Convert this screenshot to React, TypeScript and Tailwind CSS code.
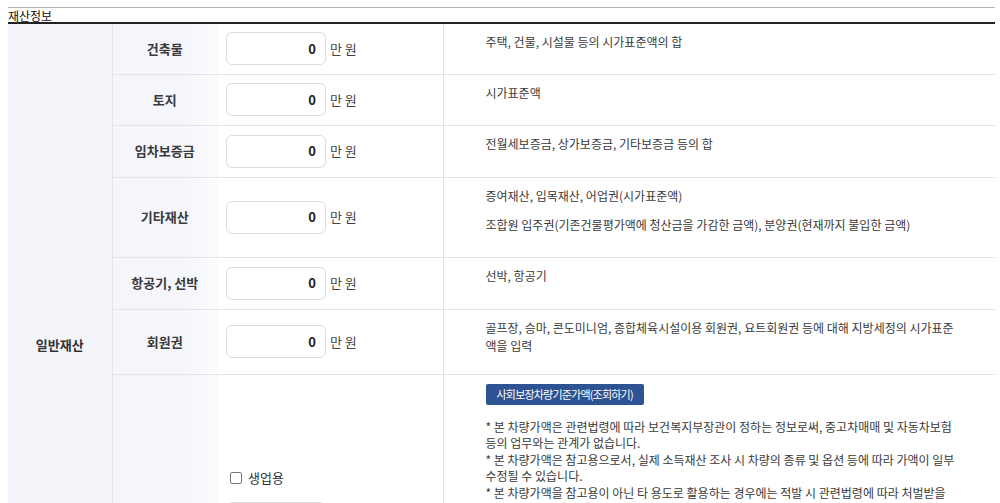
import React from "react";

const rows = [
  { label: "건축물", h: "h-[51px]", desc: ["주택, 건물, 시설물 등의 시가표준액의 합"] },
  { label: "토지", h: "h-[51px]", desc: ["시가표준액"] },
  { label: "임차보증금", h: "h-[52px]", desc: ["전월세보증금, 상가보증금, 기타보증금 등의 합"] },
  {
    label: "기타재산",
    h: "h-[80px]",
    desc: [
      "증여재산, 입목재산, 어업권(시가표준액)",
      "조합원 입주권(기존건물평가액에 청산금을 가감한 금액), 분양권(현재까지 불입한 금액)",
    ],
  },
  { label: "항공기, 선박", h: "h-[52px]", desc: ["선박, 항공기"] },
  {
    label: "회원권",
    h: "h-[65px]",
    desc: ["골프장, 승마, 콘도미니엄, 종합체육시설이용 회원권, 요트회원권 등에 대해 지방세정의 시가표준액을 입력"],
  },
];

function AmountInput() {
  return (
    <div className="flex items-center">
      <div className="w-[100px] h-[33px] border border-[#dcdcdc] rounded-[6px] bg-white flex items-center justify-end pr-[9px] text-[13px] font-bold text-[#222]">
        0
      </div>
      <span className="ml-[4px] text-[13px] text-[#444]">만 원</span>
    </div>
  );
}

export default function App() {
  return (
    <div className="w-[1000px] bg-white pl-[8px] pr-[5px] pt-[7px] font-['Noto_Sans_CJK_KR','Noto_Sans',sans-serif] text-[#333]">
      <div className="border-t border-[#b5b5b5] h-[15px] text-[12px] leading-[15px] text-[#111]">재산정보</div>
      <table className="w-full table-fixed border-collapse border-t-2 border-[#222]">
        <colgroup>
          <col className="w-[104px]" />
          <col className="w-[105px]" />
          <col className="w-[226px]" />
          <col />
        </colgroup>
        <tbody>
          {rows.map((r, i) => (
            <tr key={r.label} className={`${r.h} border-b border-[#e4e4e4]`}>
              {i === 0 && (
                <td
                  rowSpan={7}
                  className="bg-[#f3f5fb] border-r border-[#e4e4e4] text-center align-middle text-[13px] font-bold text-[#333]"
                >
                  일반재산
                </td>
              )}
              <td className="bg-linear-to-r from-[#f4f6fb] from-70% to-[#fbfcfe] text-center align-middle text-[13px] font-bold text-[#3a3a3a]">
                {r.label}
              </td>
              <td className="pl-[9px] align-middle">
                <AmountInput />
              </td>
              <td className="border-l border-[#e4e4e4] align-top pt-[9px] pl-[42px] pr-[40px] text-[12px] leading-[18px] text-[#3a3a3a]">
                {r.desc.map((d, j) => (
                  <p key={j} className={j < r.desc.length - 1 ? "mb-[11px]" : ""}>
                    {d}
                  </p>
                ))}
              </td>
            </tr>
          ))}
          <tr className="h-[291px]">
            <td className="bg-linear-to-r from-[#f4f6fb] from-70% to-[#fbfcfe] text-center align-middle text-[13px] font-bold text-[#3a3a3a]">
              자동차
            </td>
            <td className="pl-[9px] align-top pt-[94px]">
              <label className="flex items-center h-[18px] pl-[4px]">
                <span className="w-[12px] h-[12px] border border-[#777] rounded-[2px] bg-white" />
                <span className="ml-[6px] text-[13px] text-[#333]">생업용</span>
              </label>
              <div className="mt-[15px]">
                <AmountInput />
              </div>
            </td>
            <td className="border-l border-[#e4e4e4] align-top pt-[9px] pl-[42px] pr-[40px] text-[12px] text-[#3a3a3a]">
              <button className="h-[21px] px-[11px] bg-[#2d5392] rounded-[2px] text-white text-[11px] leading-[21px] tracking-[-0.8px]">
                사회보장차량기준가액(조회하기)
              </button>
              <div className="mt-[14px] leading-[16.5px]">
                <p>* 본 차량가액은 관련법령에 따라 보건복지부장관이 정하는 정보로써, 중고차매매 및 자동차보험 등의 업무와는 관계가 없습니다.</p>
                <p>* 본 차량가액은 참고용으로서, 실제 소득재산 조사 시 차량의 종류 및 옵션 등에 따라 가액이 일부 수정될 수 있습니다.</p>
                <p>* 본 차량가액을 참고용이 아닌 타 용도로 활용하는 경우에는 적발 시 관련법령에 따라 처벌받을 수 있습니다.</p>
              </div>
            </td>
          </tr>
        </tbody>
      </table>
    </div>
  );
}
